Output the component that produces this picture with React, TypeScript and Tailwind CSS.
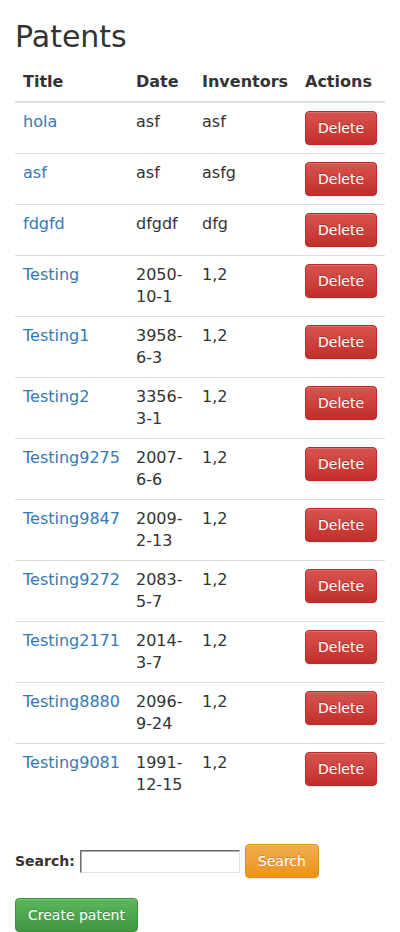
import React from "react";

const rows: [string, string, string][] = [
  ["hola", "asf", "asf"],
  ["asf", "asf", "asfg"],
  ["fdgfd", "dfgdf", "dfg"],
  ["Testing", "2050-10-1", "1,2"],
  ["Testing1", "3958-6-3", "1,2"],
  ["Testing2", "3356-3-1", "1,2"],
  ["Testing9275", "2007-6-6", "1,2"],
  ["Testing9847", "2009-2-13", "1,2"],
  ["Testing9272", "2083-5-7", "1,2"],
  ["Testing2171", "2014-3-7", "1,2"],
  ["Testing8880", "2096-9-24", "1,2"],
  ["Testing9081", "1991-12-15", "1,2"],
];

const btnBase =
  "inline-block rounded-[4px] border px-[12px] py-[6px] text-[14px] leading-[20px] text-white [text-shadow:0_-1px_0_rgba(0,0,0,0.2)] shadow-[inset_0_1px_0_rgba(255,255,255,0.15),0_1px_1px_rgba(0,0,0,0.075)] whitespace-nowrap";

export default function App() {
  return (
    <div className="bg-white min-h-[932px] px-[15px] font-['DejaVu_Sans',sans-serif] text-[14px] leading-[20px] text-[#333333]">
      <h2 className="mt-[20px] mb-[10px] text-[30px] leading-[33px] font-medium">Patents</h2>
      <table className="w-full table-fixed border-collapse text-[16px] leading-[22px]">
        <colgroup>
          <col className="w-[113px]" />
          <col className="w-[66px]" />
          <col className="w-[103px]" />
          <col className="w-[88px]" />
        </colgroup>
        <thead>
          <tr>
            <th className="p-[8px] text-left align-bottom font-bold border-b-2 border-[#dddddd]">Title</th>
            <th className="p-[8px] text-left align-bottom font-bold border-b-2 border-[#dddddd]">Date</th>
            <th className="p-[8px] text-left align-bottom font-bold border-b-2 border-[#dddddd]">Inventors</th>
            <th className="p-[8px] text-left align-bottom font-bold border-b-2 border-[#dddddd]">Actions</th>
          </tr>
        </thead>
        <tbody>
          {rows.map(([t, d, i], idx) => (
            <tr key={idx}>
              <td className={`p-[8px] align-top ${idx > 0 ? "border-t border-[#dddddd]" : ""}`}>
                <a href="#" className="text-[#337ab7] no-underline">{t}</a>
              </td>
              <td className={`p-[8px] align-top break-words ${idx > 0 ? "border-t border-[#dddddd]" : ""}`}>{d}</td>
              <td className={`p-[8px] align-top ${idx > 0 ? "border-t border-[#dddddd]" : ""}`}>{i}</td>
              <td className={`p-[8px] align-top ${idx > 0 ? "border-t border-[#dddddd]" : ""}`}>
                <button className={`${btnBase} border-[#b92c28] bg-linear-to-b from-[#d9534f] to-[#c12e2a] align-top`}>Delete</button>
              </td>
            </tr>
          ))}
        </tbody>
      </table>
      <div className="mt-[40px] flex items-center">
        <label className="font-bold">Search:</label>
        <input
          type="text"
          className="ml-[5px] h-[23px] w-[160px] border border-t-[#6f6f6f] border-l-[#6f6f6f] border-b-[#e1e1e1] border-r-[#e1e1e1] shadow-[inset_1px_1px_0_#a8a8a8] bg-white px-[2px] outline-none"
        />
        <button className={`${btnBase} ml-[5px] border-[#e38d13] bg-linear-to-b from-[#f0ad4e] to-[#eb9316]`}>Search</button>
      </div>
      <div className="mt-[20px]">
        <button className={`${btnBase} border-[#3e8f3e] bg-linear-to-b from-[#5cb85c] to-[#419641]`}>Create patent</button>
      </div>
    </div>
  );
}
